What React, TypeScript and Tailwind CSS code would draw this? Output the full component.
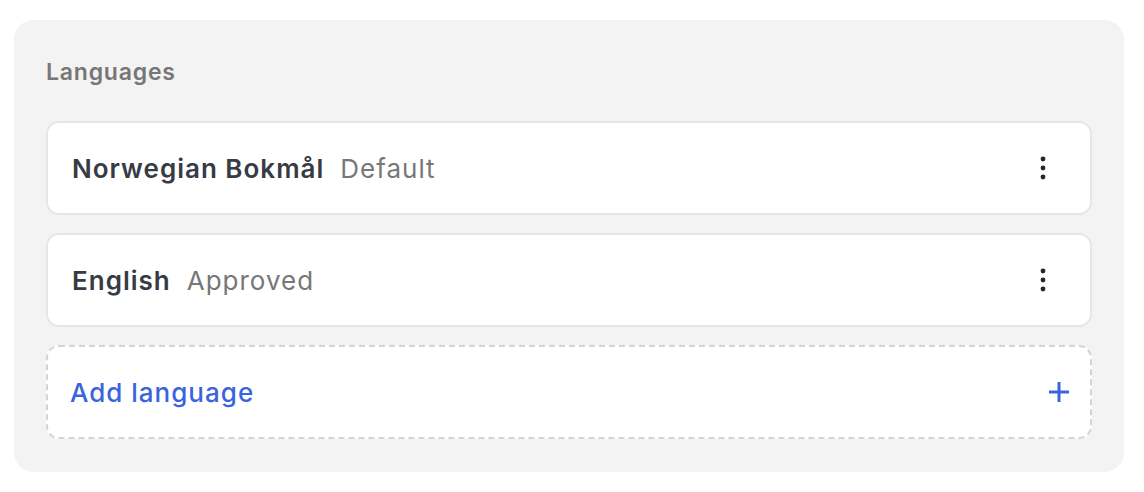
const DotsIcon = () => (
  <svg width="24" height="24" viewBox="0 0 24 24" fill="#262626">
    <circle cx="12" cy="3" r="2.4" />
    <circle cx="12" cy="12" r="2.4" />
    <circle cx="12" cy="21" r="2.4" />
  </svg>
)

const PlusIcon = () => (
  <svg width="20" height="20" viewBox="0 0 20 20" stroke="#3b63de" strokeWidth="3">
    <line x1="10" y1="0" x2="10" y2="20" />
    <line x1="0" y1="10" x2="20" y2="10" />
  </svg>
)

const languages = [
  { name: 'Norwegian Bokmål', status: 'Default' },
  { name: 'English', status: 'Approved' },
]

export default function App() {
  return (
    <div className="w-[1144px] h-[492px] bg-white pt-[20px] pl-[14px] font-['Inter',sans-serif]">
      <section className="w-[1110px] rounded-[20px] bg-[#f3f3f3] px-[32px] pt-[38px] pb-[33px]">
        <h2 className="text-[23px] leading-[28px] tracking-[0.8px] font-semibold text-[#767676] mb-[35px]">
          Languages
        </h2>

        <div className="flex flex-col gap-[18px]">
          {languages.map((lang) => (
            <div
              key={lang.name}
              className="h-[94px] flex items-center justify-between rounded-[13px] border-2 border-[#e6e6e6] bg-white pl-[24px] pr-[35px]"
            >
              <div className="flex items-baseline gap-[16px] text-[26px] tracking-[1px]">
                <span className="font-semibold text-[#363b44]">{lang.name}</span>
                <span className="text-[#777777]">{lang.status}</span>
              </div>
              <button className="flex items-center justify-center">
                <DotsIcon />
              </button>
            </div>
          ))}

          <button className="h-[94px] flex items-center justify-between rounded-[13px] border-2 border-dashed border-[#d4d4d4] bg-white pl-[22px] pr-[21px]">
            <span className="text-[26px] tracking-[1px] font-medium text-[#3b63de]">Add language</span>
            <PlusIcon />
          </button>
        </div>
      </section>
    </div>
  )
}
